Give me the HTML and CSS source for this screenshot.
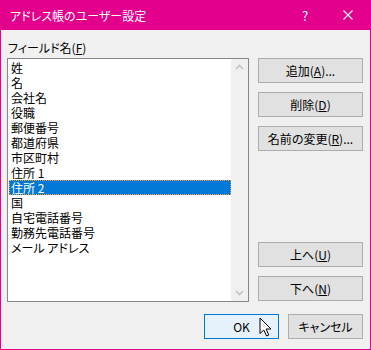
FILE: index.html
```html
<!DOCTYPE html>
<html lang="ja">
<head>
  <meta charset="UTF-8">
  <title>アドレス帳のユーザー設定</title>
  <link rel="stylesheet" href="styles.css">
</head>
<body>
  <div class="window">
    <div class="titlebar">
      <span class="title">アドレス帳のユーザー設定</span>
      <span class="help">?</span>
      <svg class="close" width="10" height="10" viewBox="0 0 10 10">
        <path d="M0.5 0.5 L9.5 9.5 M9.5 0.5 L0.5 9.5" stroke="#fff" stroke-width="1.1"/>
      </svg>
    </div>

    <div class="dialog-body">
      <div class="field-label">フィールド名(<u>F</u>)</div>

      <div class="main">
        <div class="listbox">
          <ul class="items">
            <li>姓</li>
            <li>名</li>
            <li>会社名</li>
            <li>役職</li>
            <li>郵便番号</li>
            <li>都道府県</li>
            <li>市区町村</li>
            <li>住所 1</li>
            <li class="selected">住所 2</li>
            <li>国</li>
            <li>自宅電話番号</li>
            <li>勤務先電話番号</li>
            <li>メール アドレス</li>
          </ul>
          <div class="scrollbar">
            <svg width="17" height="17" viewBox="0 0 17 17"><path d="M5 10 L8.5 6.5 L12 10" fill="none" stroke="#c2c2c2" stroke-width="1.6"/></svg>
            <svg width="17" height="17" viewBox="0 0 17 17"><path d="M5 7 L8.5 10.5 L12 7" fill="none" stroke="#c2c2c2" stroke-width="1.6"/></svg>
          </div>
        </div>

        <div class="side-buttons">
          <button>追加(<u>A</u>)...</button>
          <button>削除(<u>D</u>)</button>
          <button>名前の変更(<u>R</u>)...</button>
          <button class="push-down">上へ(<u>U</u>)</button>
          <button>下へ(<u>N</u>)</button>
        </div>
      </div>

      <div class="footer">
        <button class="default">OK</button>
        <button>キャンセル</button>
      </div>
    </div>

    <!-- mouse pointer resting on the OK button -->
    <svg class="cursor" width="13" height="20" viewBox="0 0 13 20">
      <path d="M1 1 V16.5 L4.8 13 L7.6 19 L9.8 18 L7.1 12 H12 Z" fill="#fff" stroke="#000" stroke-width="1" stroke-linejoin="round"/>
    </svg>
  </div>
</body>
</html>
```

FILE: styles.css
```css
body {
  margin: 0;
  background: #f0f0f0;
}

.window {
  position: relative;
  width: 371px;
  height: 350px;
  box-sizing: border-box;
  border: 1px solid #e3008c;
  border-top: none;
  background: #f0f0f0;
  font-family: "Noto Sans CJK JP", "Noto Sans", sans-serif;
  font-size: 12px;
  font-feature-settings: "palt";
  color: #000;
}

.titlebar {
  height: 30px;
  background: #e3008c;
  color: #fff;
  display: flex;
  align-items: center;
  padding-left: 9px;
}

.title {
  flex: 1;
  line-height: 15px;
}

.help {
  width: 12px;
  text-align: center;
  margin-right: 32px;
  font-size: 13px;
  line-height: 15px;
}

.close {
  margin-right: 17px;
}

.dialog-body {
  padding: 8px 7px 0 6px;
}

.field-label {
  height: 20px;
  line-height: 20px;
  padding-left: 1px;
}

.main {
  display: grid;
  grid-template-columns: 242px 105px;
  column-gap: 9px;
  height: 244px;
}

.listbox {
  display: flex;
  border: 1px solid #828790;
  background: #fff;
}

.items {
  flex: 1;
  list-style: none;
  margin: 0;
  padding: 1px 0 0 1px;
}

.items li {
  height: 15px;
  line-height: 15px;
  padding-left: 2px;
  white-space: nowrap;
}

.items li.selected {
  background: #0078d7;
  color: #fff;
  outline: 1px dotted #f39c3c;
  outline-offset: -1px;
}

.scrollbar {
  width: 17px;
  background: #f0f0f0;
  display: flex;
  flex-direction: column;
  justify-content: space-between;
}

.scrollbar svg {
  display: block;
}

.side-buttons {
  display: flex;
  flex-direction: column;
  gap: 9px;
  padding-bottom: 1px;
}

button {
  height: 25px;
  padding: 0;
  border: 1px solid #adadad;
  background: #e1e1e1;
  font: inherit;
  color: #000;
  line-height: 15px;
}

.push-down {
  margin-top: auto;
}

.footer {
  display: flex;
  justify-content: flex-end;
  gap: 9px;
  margin-top: 12px;
}

.footer button {
  width: 75px;
}

.footer .default {
  border-color: #0078d7;
  background: #e5f1fb;
}

.cursor {
  position: absolute;
  left: 258px;
  top: 317px;
}
```
